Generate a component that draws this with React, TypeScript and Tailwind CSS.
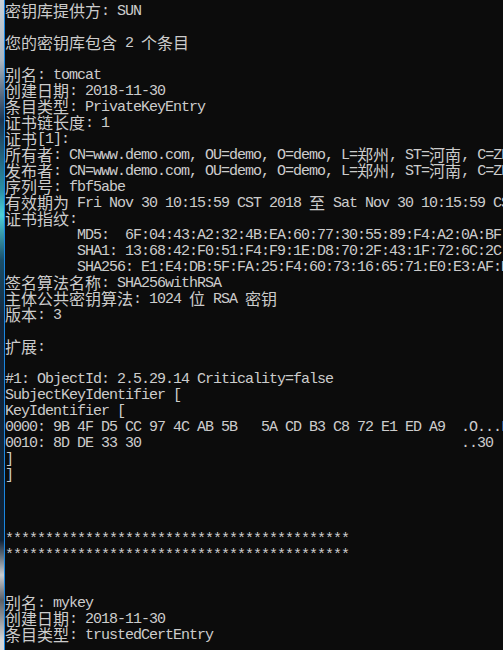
const lines: string[] = [
  "密钥库提供方: SUN",
  "",
  "您的密钥库包含 2 个条目",
  "",
  "别名: tomcat",
  "创建日期: 2018-11-30",
  "条目类型: PrivateKeyEntry",
  "证书链长度: 1",
  "证书[1]:",
  "所有者: CN=www.demo.com, OU=demo, O=demo, L=郑州, ST=河南, C=ZH",
  "发布者: CN=www.demo.com, OU=demo, O=demo, L=郑州, ST=河南, C=ZH",
  "序列号: fbf5abe",
  "有效期为 Fri Nov 30 10:15:59 CST 2018 至 Sat Nov 30 10:15:59 CST 2019",
  "证书指纹:",
  "         MD5:  6F:04:43:A2:32:4B:EA:60:77:30:55:89:F4:A2:0A:BF",
  "         SHA1: 13:68:42:F0:51:F4:F9:1E:D8:70:2F:43:1F:72:6C:2C:5D:91:A8:04",
  "         SHA256: E1:E4:DB:5F:FA:25:F4:60:73:16:65:71:E0:E3:AF:D2:4C:87",
  "签名算法名称: SHA256withRSA",
  "主体公共密钥算法: 1024 位 RSA 密钥",
  "版本: 3",
  "",
  "扩展: ",
  "",
  "#1: ObjectId: 2.5.29.14 Criticality=false",
  "SubjectKeyIdentifier [",
  "KeyIdentifier [",
  "0000: 9B 4F D5 CC 97 4C AB 5B   5A CD B3 C8 72 E1 ED A9  .O...L.[Z...r...",
  "0010: 8D DE 33 30                                        ..30",
  "]",
  "]",
  "",
  "",
  "",
  "*******************************************",
  "*******************************************",
  "",
  "",
  "别名: mykey",
  "创建日期: 2018-11-30",
  "条目类型: trustedCertEntry",
  "",
];

// split a console line into half-width and full-width runs
const splitRuns = (text: string) => {
  const runs: { wide: boolean; text: string }[] = [];
  const re = /[\u3000-\u9fff\uff00-\uffef]+/g;
  let last = 0;
  let m: RegExpExecArray | null;
  while ((m = re.exec(text)) !== null) {
    if (m.index > last) runs.push({ wide: false, text: text.slice(last, m.index) });
    runs.push({ wide: true, text: m[0] });
    last = m.index + m[0].length;
  }
  if (last < text.length) runs.push({ wide: false, text: text.slice(last) });
  return runs;
};

const ConsoleLine = ({ text }: { text: string }) => {
  return (
    <div className="h-4 whitespace-pre">
      {splitRuns(text).map((r, i) =>
        r.wide ? (
          <span
            key={i}
            className="inline-block align-top h-4 leading-4 text-[16px] font-['Noto_Sans_CJK_SC',sans-serif]"
          >
            {r.text}
          </span>
        ) : (
          <span
            key={i}
            className="inline-block align-top h-4 leading-[19px] text-[15px] tracking-[-1px] font-['Liberation_Mono',monospace]"
          >
            {r.text}
          </span>
        )
      )}
    </div>
  );
};

const App = () => {
  return (
    <section className="flex w-[503px] h-[650px] overflow-hidden">
      {/* desktop peeking out on the left */}
      <div className="w-[4px] h-full shrink-0 bg-[linear-gradient(to_bottom,#c9d1d8_0px,#aab6c2_60px,#1c3552_120px,#2a8fa6_190px,#4fd0d8_215px,#1a4f6a_260px,#13263d_320px,#0f2236_540px,#c8ccd0_575px,#5a5f66_600px,#d4d6d8_640px)]" />
      {/* window border */}
      <div className="w-px h-full shrink-0 bg-[#1a86e0]" />
      {/* console */}
      <div className="flex-1 h-full bg-[#0c0c0c] text-[#cccccc] pt-[2px] overflow-hidden">
        {lines.map((l, i) => (
          <ConsoleLine key={i} text={l} />
        ))}
      </div>
    </section>
  );
};

export default App;
